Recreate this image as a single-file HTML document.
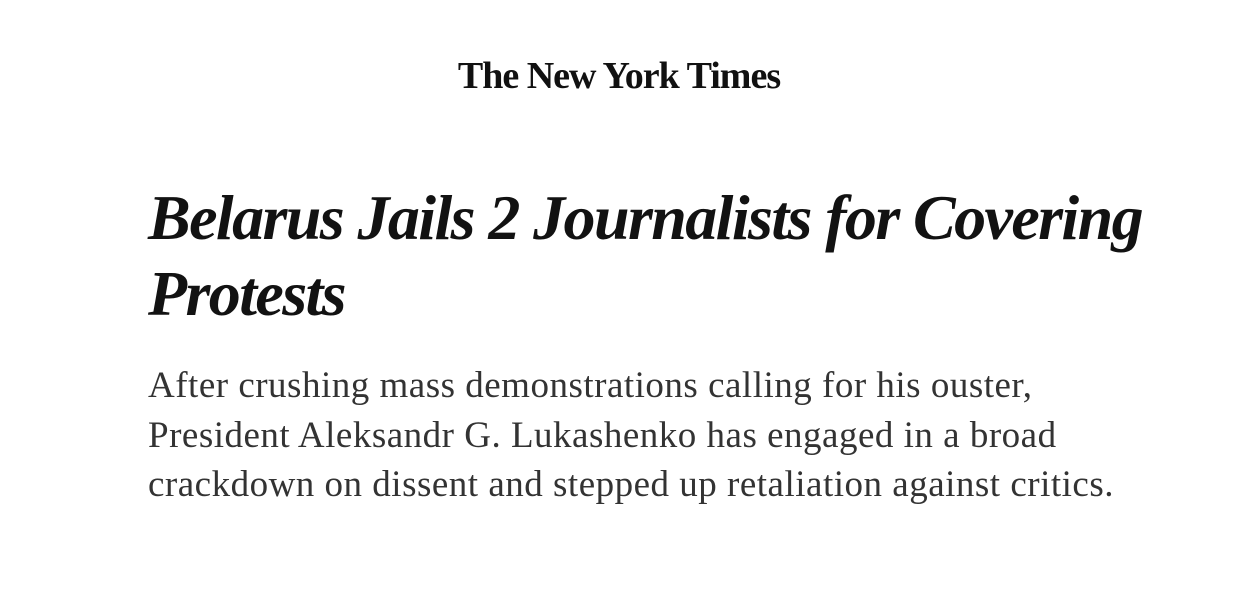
<!DOCTYPE html>
<html><head><meta charset="utf-8"><style>
html,body{margin:0;padding:0;background:#fff;width:1238px;height:602px;overflow:hidden}
.logo{position:absolute;top:54px;left:0;width:1238px;text-align:center;font-family:"Liberation Serif",serif;font-weight:bold;font-size:38px;color:#111;letter-spacing:-1px}
h1{position:absolute;left:148px;top:180px;margin:0;font-family:"Liberation Serif",serif;font-style:italic;font-weight:bold;font-size:64px;line-height:76px;color:#121212;letter-spacing:-1.6px;white-space:nowrap}
p{position:absolute;left:148px;top:361px;margin:0;font-family:"Liberation Serif",serif;font-size:37px;line-height:49.5px;color:#333;white-space:nowrap;letter-spacing:0.5px}
</style></head><body>
<div class="logo">The New York Times</div>
<h1>Belarus Jails 2 Journalists for Covering<br>Protests</h1>
<p>After crushing mass demonstrations calling for his ouster,<br>President Aleksandr G. Lukashenko has engaged in a broad<br>crackdown on dissent and stepped up retaliation against critics.</p>
</body></html>
